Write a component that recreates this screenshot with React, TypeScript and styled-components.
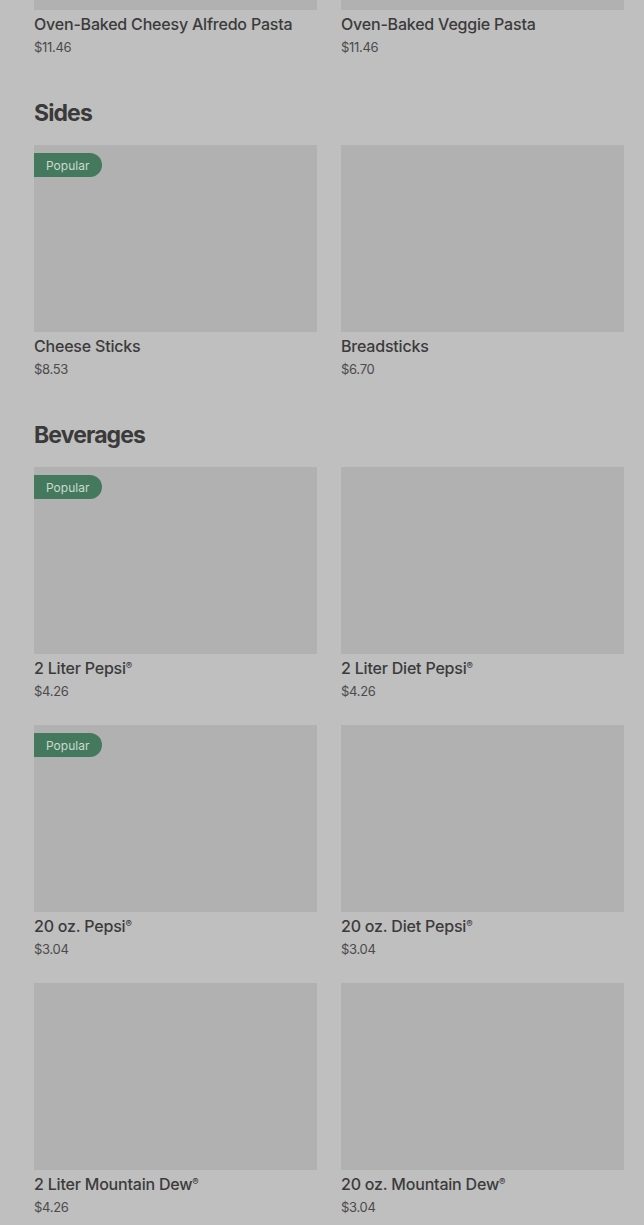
import React from "react";
import styled, { createGlobalStyle } from "styled-components";

const GlobalStyle = createGlobalStyle`
  html, body {
    margin: 0;
    padding: 0;
    background: #bfbfbf;
  }
  body {
    font-family: Inter, "Noto Sans", "Liberation Sans", sans-serif;
    overflow: hidden;
  }
`;

const Page = styled.div`
  width: 644px;
  height: 1225px;
  overflow: hidden;
  background: #bfbfbf;
  padding: 0 20px 0 34px;
  box-sizing: border-box;
`;

// list is scrolled: only the bottom of the first row's images shows
const Scroller = styled.div`
  margin-top: -177px;
`;

const Section = styled.section<{ $first?: boolean }>`
  padding-top: ${(p) => (p.$first ? "0" : "41px")};
`;

const Heading = styled.h2`
  margin: 0 0 16px;
  font-size: 23px;
  line-height: 32px;
  font-weight: 700;
  letter-spacing: -0.9px;
  color: #3a3a3a;
`;

const Grid = styled.div`
  display: grid;
  grid-template-columns: 283px 283px;
  column-gap: 24px;
  row-gap: 25px;
`;

const Card = styled.div`
  display: flex;
  flex-direction: column;
`;

const Thumb = styled.div`
  position: relative;
  height: 187px;
  background: #b1b1b1;
`;

const Badge = styled.span`
  position: absolute;
  top: 8px;
  left: 0;
  height: 24px;
  padding: 0 13px 0 12px;
  display: flex;
  align-items: center;
  background: #45795d;
  color: #c9dbd0;
  font-size: 12px;
  border-radius: 0 12px 12px 0;
`;

const Name = styled.div`
  margin-top: 4px;
  font-size: 16px;
  line-height: 20px;
  font-weight: 500;
  letter-spacing: -0.2px;
  color: #3b3b3b;
  white-space: nowrap;
`;

const Sup = styled.span`
  font-size: 0.6em;
  line-height: 0;
  vertical-align: 0.5em;
`;

const Price = styled.div`
  margin-top: 4px;
  font-size: 13px;
  line-height: 18px;
  color: #4b4b4b;
  letter-spacing: -0.3px;
`;

type Item = { name: string; price: string; popular?: boolean };

const sections: { title?: string; items: Item[] }[] = [
  {
    items: [
      { name: "Oven-Baked Cheesy Alfredo Pasta", price: "$11.46" },
      { name: "Oven-Baked Veggie Pasta", price: "$11.46" },
    ],
  },
  {
    title: "Sides",
    items: [
      { name: "Cheese Sticks", price: "$8.53", popular: true },
      { name: "Breadsticks", price: "$6.70" },
    ],
  },
  {
    title: "Beverages",
    items: [
      { name: "2 Liter Pepsi®", price: "$4.26", popular: true },
      { name: "2 Liter Diet Pepsi®", price: "$4.26" },
      { name: "20 oz. Pepsi®", price: "$3.04", popular: true },
      { name: "20 oz. Diet Pepsi®", price: "$3.04" },
      { name: "2 Liter Mountain Dew®", price: "$4.26" },
      { name: "20 oz. Mountain Dew®", price: "$3.04" },
    ],
  },
];

const renderName = (name: string) =>
  name.split("®").map((part, i, arr) => (
    <React.Fragment key={i}>
      {part}
      {i < arr.length - 1 && <Sup>®</Sup>}
    </React.Fragment>
  ));

const App: React.FC = () => {
  return (
    <Page>
      <GlobalStyle />
      <Scroller>
        {sections.map((section, si) => (
          <Section key={si} $first={si === 0}>
            {section.title && <Heading>{section.title}</Heading>}
            <Grid>
              {section.items.map((item) => (
                <Card key={item.name}>
                  <Thumb>{item.popular && <Badge>Popular</Badge>}</Thumb>
                  <Name>{renderName(item.name)}</Name>
                  <Price>{item.price}</Price>
                </Card>
              ))}
            </Grid>
          </Section>
        ))}
      </Scroller>
    </Page>
  );
};

export default App;
